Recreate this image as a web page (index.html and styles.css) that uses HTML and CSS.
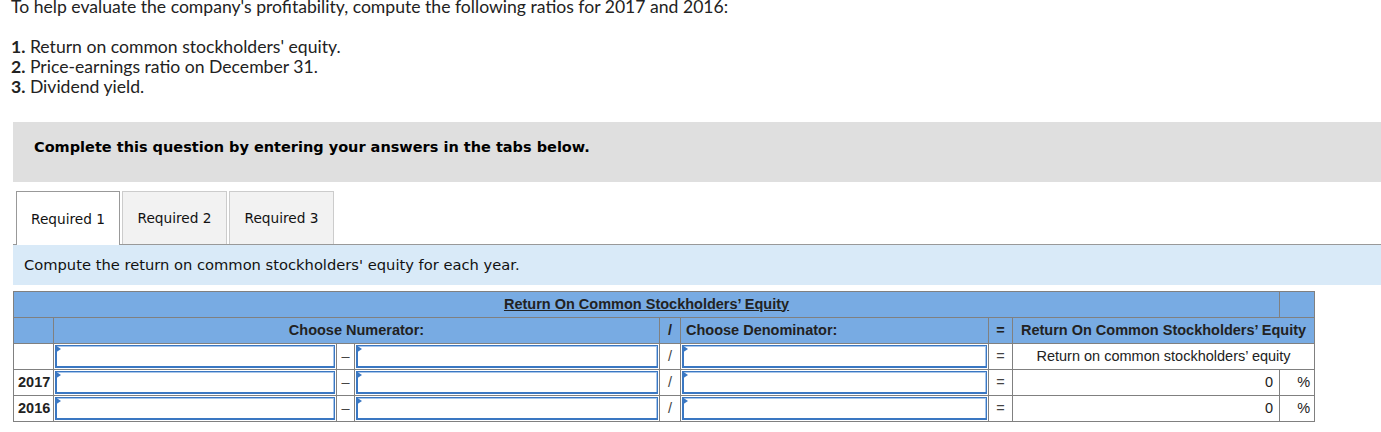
FILE: index.html
```html
<!DOCTYPE html>
<html lang="en">
<head>
    <meta charset="UTF-8">
    <title>Return on common stockholders' equity</title>
    <link rel="stylesheet" href="styles.css">
</head>
<body>
    <div class="question">
        <p class="intro">To help evaluate the company's profitability, compute the following ratios for 2017 and 2016:</p>
        <ul class="tasks">
            <li><b>1.</b> Return on common stockholders' equity.</li>
            <li><b>2.</b> Price-earnings ratio on December 31.</li>
            <li><b>3.</b> Dividend yield.</li>
        </ul>
    </div>

    <div class="instructions">Complete this question by entering your answers in the tabs below.</div>

    <div class="tabs">
        <button class="tab active">Required 1</button>
        <button class="tab">Required 2</button>
        <button class="tab">Required 3</button>
    </div>

    <div class="prompt">Compute the return on common stockholders' equity for each year.</div>

    <table class="ratio-table">
        <colgroup>
            <col style="width:40px">
            <col style="width:283px">
            <col style="width:18px">
            <col style="width:305px">
            <col style="width:21px">
            <col style="width:308px">
            <col style="width:24px">
            <col style="width:267px">
            <col style="width:35px">
        </colgroup>
        <tr class="head">
            <th colspan="8" class="title"><u>Return On Common Stockholders’ Equity</u></th>
            <th></th>
        </tr>
        <tr class="head">
            <th></th>
            <th colspan="3">Choose Numerator:</th>
            <th class="op">/</th>
            <th class="left">Choose Denominator:</th>
            <th class="op">=</th>
            <th colspan="2">Return On Common Stockholders’ Equity</th>
        </tr>
        <tr>
            <td></td>
            <td class="pick"><div class="select"></div></td>
            <td class="op">–</td>
            <td class="pick"><div class="select"></div></td>
            <td class="op">/</td>
            <td class="pick"><div class="select"></div></td>
            <td class="op">=</td>
            <td colspan="2" class="center">Return on common stockholders’ equity</td>
        </tr>
        <tr>
            <td class="year">2017</td>
            <td class="pick"><div class="select"></div></td>
            <td class="op">–</td>
            <td class="pick"><div class="select"></div></td>
            <td class="op">/</td>
            <td class="pick"><div class="select"></div></td>
            <td class="op">=</td>
            <td class="num">0</td>
            <td class="unit">%</td>
        </tr>
        <tr>
            <td class="year">2016</td>
            <td class="pick"><div class="select"></div></td>
            <td class="op">–</td>
            <td class="pick"><div class="select"></div></td>
            <td class="op">/</td>
            <td class="pick"><div class="select"></div></td>
            <td class="op">=</td>
            <td class="num">0</td>
            <td class="unit">%</td>
        </tr>
    </table>
</body>
</html>
```

FILE: styles.css
```css
* {
    margin: 0;
    padding: 0;
    box-sizing: border-box;
}

body {
    font-family: Lato, "Open Sans", sans-serif;
    font-size: 17.6px;
    color: #222;
    background-color: #fff;
    overflow: hidden;
}

.question {
    padding-left: 11px;
    margin-top: -3px;
    line-height: 20px;
}

.intro {
    margin-bottom: 20px;
}

.tasks {
    list-style: none;
}

.instructions {
    margin: 25px 0 0 13px;
    height: 60px;
    padding: 16px 0 0 21px;
    line-height: 18px;
    background-color: #dfdfdf;
    font-family: "DejaVu Sans", Verdana, sans-serif;
    font-size: 14.5px;
    font-weight: bold;
    color: #000;
}

.tabs {
    margin: 9px 0 0 13px;
    padding-left: 3px;
    display: flex;
    gap: 2px;
    border-bottom: 1px solid #999;
}

.tab {
    width: 105px;
    height: 53px;
    font-family: "DejaVu Sans", Verdana, sans-serif;
    font-size: 13.7px;
    color: #111;
    background-color: #f2f2f2;
    border: 1px solid #ccc;
    border-bottom: none;
    cursor: pointer;
}

.tab.active {
    width: 104px;
    height: 54px;
    margin-bottom: -1px;
    background-color: #fff;
    border-color: #999;
}

.prompt {
    margin-left: 13px;
    height: 40px;
    padding: 0 0 1px 11px;
    display: flex;
    align-items: center;
    background-color: #d9eaf8;
    font-family: "DejaVu Sans", Verdana, sans-serif;
    font-size: 14.7px;
    color: #111;
}

.ratio-table {
    margin: 6px 0 0 13px;
    width: 1301px;
    table-layout: fixed;
    border-collapse: collapse;
    font-family: "Liberation Sans", Arial, sans-serif;
    font-size: 14.5px;
    color: #222;
}

.ratio-table th,
.ratio-table td {
    height: 26px;
    border: 1px solid #808080;
    padding: 0 3px 2px;
    text-align: center;
    white-space: nowrap;
    overflow: hidden;
    line-height: 16px;
}

.ratio-table .head th {
    background-color: #78abe3;
    font-weight: bold;
}

.ratio-table .head th.left {
    text-align: left;
    padding-left: 5px;
}

.ratio-table td.op {
    color: #444;
    padding: 0 0 2px;
}

.ratio-table td.year {
    font-weight: bold;
    text-align: left;
    padding-left: 4px;
}

.ratio-table td.pick {
    padding: 1px;
}

.select {
    position: relative;
    height: 23px;
    background-color: #fff;
    border: 1px solid #3a77c2;
    box-shadow: inset 1px 0 0 #3a77c2, inset 0 -1px 0 #3a77c2, inset 0 1px 0 #a8c6ea, inset -1px 0 0 #a8c6ea;
}

.select::before {
    content: "";
    position: absolute;
    top: -1px;
    left: -1px;
    border-top: 4px solid transparent;
    border-bottom: 4px solid transparent;
    border-left: 6px solid #3a77c2;
}

.ratio-table td.num {
    text-align: right;
    padding-right: 6px;
}

.ratio-table td.unit {
    text-align: right;
    padding-right: 4px;
}
```
